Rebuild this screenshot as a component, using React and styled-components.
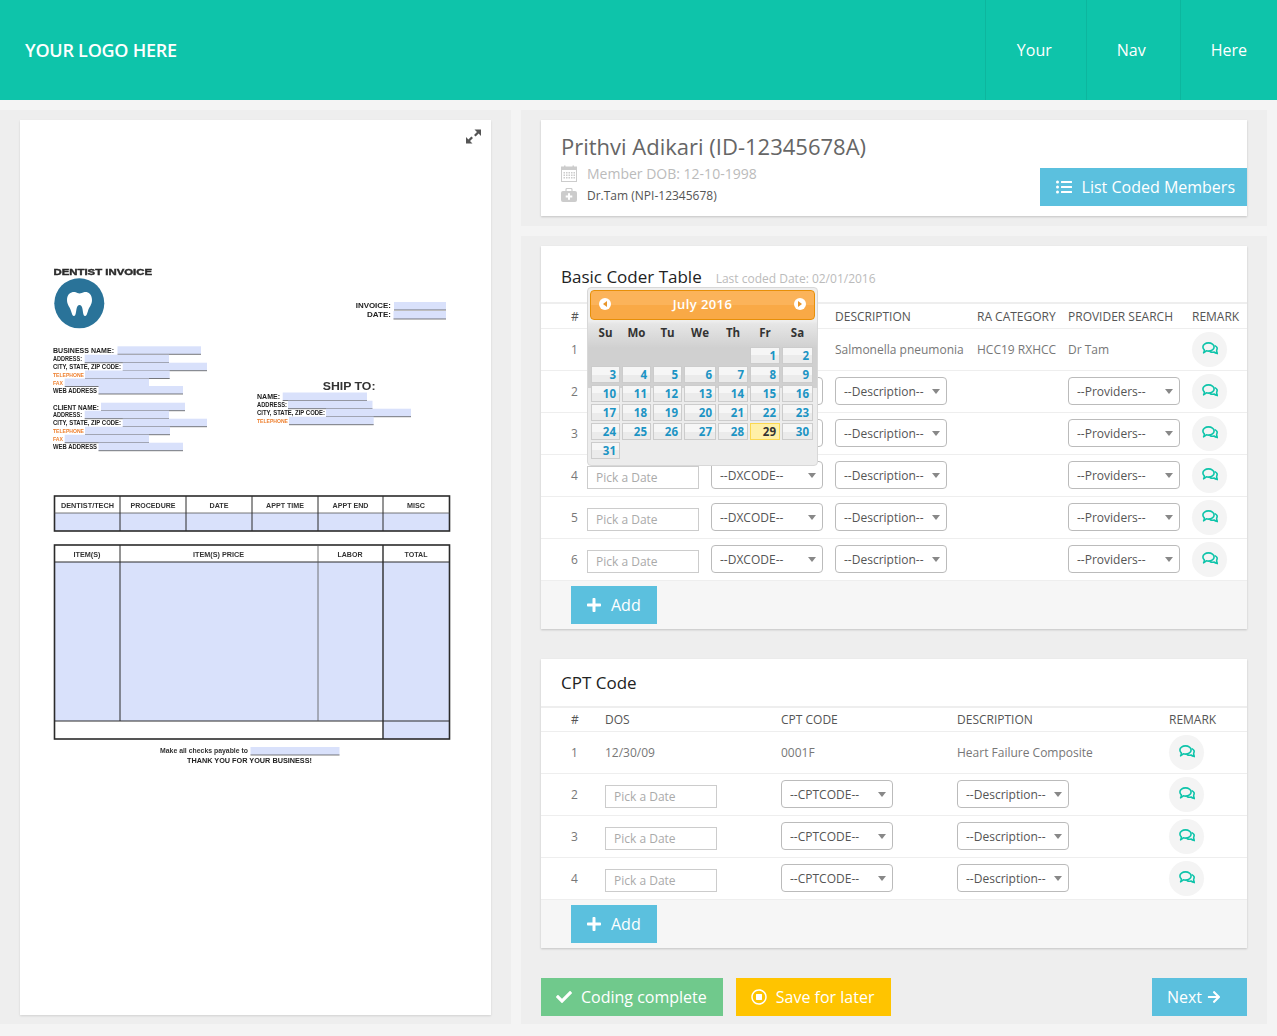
import React from 'react';
import styled, { createGlobalStyle } from 'styled-components';
import { FaListUl, FaCheck, FaPlus, FaRegStopCircle, FaArrowRight } from 'react-icons/fa';

const Global = createGlobalStyle`
  html, body { margin: 0; padding: 0; background: #f4f4f4; }
  body { font-family: "Open Sans", "Liberation Sans", sans-serif; color: #666; font-size: 12px; }
  * { box-sizing: border-box; }
`;

const Page = styled.div`
  width: 1277px;
  height: 1036px;
  overflow: hidden;
`;
const Header = styled.header`
  height: 100px;
  background: #0ec4aa;
  display: flex;
  align-items: stretch;
  justify-content: space-between;
  color: #fff;
`;
const Logo = styled.div`
  align-self: center;
  margin-left: 25px;
  font-size: 18px;
  font-weight: 600;
  letter-spacing: -0.25px;
`;
const Nav = styled.nav`
  display: flex;
`;
const NavItem = styled.a`
  display: flex;
  align-items: center;
  padding: 0 34px 0 30px;
  font-size: 16px;
  font-weight: 400;
  border-left: 1px solid rgba(0, 0, 0, 0.07);
  &:first-child {
    padding-left: 31px;
  }
  &:last-child {
    padding-right: 30px;
  }
`;
const Main = styled.main`
  display: flex;
  gap: 10px;
  padding-top: 10px;
`;
const LeftColumn = styled.section`
  width: 511px;
  height: 914px;
  background: #eeeeee;
  padding: 10px 20px;
`;
const DocCard = styled.div`
  position: relative;
  width: 471px;
  height: 895px;
  background: #fff;
  box-shadow: 0 1px 2px rgba(0, 0, 0, 0.12);
`;
const ExpandButton = styled.span`
  position: absolute;
  top: 9px;
  right: 10px;
  line-height: 0;
`;
const DocSvg = styled.svg`
  display: block;
  filter: blur(0.3px);
  font-family: "Liberation Sans", Arial, sans-serif;
`;
const RightColumn = styled.section`
  width: 746px;
  display: flex;
  flex-direction: column;
  gap: 10px;
`;
const Band = styled.div`
  background: #eeeeee;
  padding: 10px 20px;
  display: flex;
  flex-direction: column;
  gap: 30px;
`;
const Card = styled.div`
  position: relative;
  background: #fff;
  box-shadow: 0 1px 2px rgba(0, 0, 0, 0.18);
`;
const MemberCard = styled(Card)`
  height: 96px;
  padding: 11px 20px 0;
  display: flex;
  justify-content: space-between;
`;
const MemberName = styled.h1`
  margin: 0 0 1px;
  font-size: 22px;
  line-height: 30px;
  font-weight: 400;
  color: #666;
`;
const MemberLine = styled.div`
  display: flex;
  align-items: center;
  gap: 10px;
  height: 22px;
  font-size: ${p => (p.$strong ? '12px' : '14px')};
  color: ${p => (p.$strong ? '#555' : '#bbb')};
`;
const MemberIcon = styled.span`
  display: inline-flex;
  width: 16px;
  justify-content: center;
`;
const ActionButton = styled.button`
  display: inline-flex;
  align-items: center;
  gap: ${p => p.$gap || 9}px;
  height: 38px;
  border: 0;
  padding: 0 ${p => p.$pad || 16}px 0 15px;
  background: ${p => p.$bg || '#5bc0de'};
  color: #fff;
  font-family: inherit;
  font-size: 16px;
  font-weight: 400;
  white-space: nowrap;
  & > svg {
    font-size: ${p => p.$icon || 16}px;
    flex: none;
  }
`;
const ListButton = styled(ActionButton)`
  align-self: flex-end;
  margin: 0 -20px 10px 0;
  padding: 0 12px 0 16px;
  gap: 10px;
`;
const CardHead = styled.div`
  display: flex;
  align-items: center;
  gap: 14px;
  height: ${p => (p.$tall ? 58 : 49)}px;
  padding: ${p => (p.$tall ? '5px' : '0')} 20px 0;
  border-bottom: 2px solid #eee;
`;
const CardTitle = styled.h2`
  margin: 0;
  font-size: 17px;
  font-weight: 400;
  color: #222;
`;
const CardNote = styled.span`
  font-size: 12px;
  color: #bbb;
  padding-top: 3px;
`;
const Row = styled.div`
  display: grid;
  grid-template-columns: ${p => p.$cols};
  align-items: center;
  height: ${p => p.$h || 42}px;
  padding-left: 30px;
  border-bottom: 1px solid #eee;
  font-size: 12px;
  color: ${p => (p.$head ? '#555' : '#777')};
  white-space: nowrap;
`;
const DateCell = styled.div`
  display: flex;
  align-items: flex-end;
  height: 28px;
  margin-bottom: 1px;
`;
const DateInput = styled.div`
  width: 112px;
  height: 23px;
  border: 1px solid #ccc;
  padding-left: 8px;
  line-height: 22px;
  font-size: 12px;
  color: #aaa;
`;
const Select = styled.div`
  position: relative;
  width: 112px;
  height: 28px;
  margin-bottom: 1px;
  border: 1px solid #bbb;
  border-radius: 4px;
  padding-left: 8px;
  line-height: 28px;
  font-size: 12px;
  color: #555;
  &::after {
    content: '';
    position: absolute;
    right: 6px;
    top: 11px;
    border: 4px solid transparent;
    border-top: 5px solid #888;
    border-bottom: 0;
  }
`;
const RemarkButton = styled.span`
  display: flex;
  align-items: center;
  justify-content: center;
  width: 35px;
  height: 35px;
  padding-bottom: 3px;
  border-radius: 50%;
  background: #f4f4f4;
`;
const CardFooter = styled.div`
  height: 48px;
  padding: 5px 30px 0;
  background: #f6f6f6;
`;
const ButtonBar = styled.div`
  display: flex;
  justify-content: space-between;
  margin-bottom: -2px;
`;
const ButtonGroup = styled.div`
  display: flex;
  gap: 13px;
`;
const Calendar = styled.div`
  position: absolute;
  left: 46px;
  top: 41px;
  width: 231px;
  height: 179px;
  padding: 2px;
  border: 1px solid #d8d8d8;
  border-radius: 4px;
  background: linear-gradient(#eeeeee 0, #eeeeee 33px, #e6e6e6 36px, #d0d0d0 60px, #d0d0d0 100px, #ececec 100px);
`;
const CalHeader = styled.div`
  display: flex;
  align-items: center;
  justify-content: space-between;
  height: 30px;
  padding: 0 8px 2px;
  border: 1px solid #e78f08;
  border-radius: 4px;
  background: linear-gradient(#fbb35a 0, #fbb35a 50%, #f9a946 50%, #f9a946 100%);
  color: #fff;
  font-size: 13px;
  font-weight: 600;
  letter-spacing: 0.4px;
`;
const CalArrow = styled.span`
  display: flex;
  align-items: center;
  justify-content: center;
  width: 12px;
  height: 12px;
  border-radius: 50%;
  background: #fff;
  &::before {
    content: '';
    border-style: solid;
    border-color: transparent;
    border-width: 3.5px 0;
    ${p => (p.$dir === 'left' ? 'border-right: 4px solid #e8962a;' : 'border-left: 4px solid #e8962a;')}
  }
`;
const CalGrid = styled.div`
  display: grid;
  grid-template-columns: 29px 29px 29px 32px 30px 30px 31px;
  grid-template-rows: 22px repeat(6, 17px);
  column-gap: 2px;
  row-gap: 2px;
  margin-top: 3px;
  padding-left: 1px;
`;
const WeekDay = styled.div`
  text-align: center;
  line-height: 20px;
  font-size: 11.5px;
  font-weight: 700;
  color: #333;
`;
const DayCell = styled.div`
  grid-column: ${p => p.$col || 'auto'};
  border: 1px solid ${p => (p.$today ? '#fbd850' : '#cccccc')};
  background: ${p => (p.$today ? '#fff0a8' : 'linear-gradient(#f6f6f6 50%, #ebebeb 50%)')};
  color: ${p => (p.$today ? '#333' : '#1c94c4')};
  text-align: right;
  padding-right: 3px;
  line-height: 15px;
  font-size: 11.5px;
  font-weight: 700;
`;

const basicCols = '16px 124px 124px 142px 91px 124px 55px';
const cptCols = '34px 176px 176px 212px 78px';
const week = ['Su', 'Mo', 'Tu', 'We', 'Th', 'Fr', 'Sa'];
const days = Array.from({ length: 31 }, (_, i) => i + 1);

const CommentsIcon = () => (
  <svg width="16" height="13" viewBox="0 0 16 13" fill="none" stroke="#0ec4aa" strokeWidth="1.6" strokeLinejoin="round" strokeLinecap="round">
    <path d="M6.5 0.9C9.6 0.9 12.1 2.8 12.1 5C12.1 7.2 9.6 9.1 6.5 9.1C5.7 9.1 5 9 4.3 8.8C3.6 9.6 2.6 10.4 1.6 10.8C2.2 9.8 2.4 8.8 2.3 7.8C1.4 7 0.9 6 0.9 5C0.9 2.8 3.4 0.9 6.5 0.9Z" />
    <path d="M13.2 3.9C15 4.8 15.6 6.4 14.8 7.8C14.4 8.5 14.8 10 15.4 11.6C14 11.2 12.8 10.6 12 10C10.5 10.4 9 10.2 8 9.5" />
  </svg>
);

const Remark = () => (
  <RemarkButton><CommentsIcon /></RemarkButton>
);

const CalendarIcon = () => (
  <svg width="16" height="17" viewBox="0 0 16 17">
    <rect x="0.5" y="2" width="15" height="14.5" fill="#fff" stroke="#ccc" />
    <rect x="0.5" y="2" width="15" height="3" fill="#ccc" />
    <rect x="3" y="0.5" width="1.5" height="3" fill="#ccc" />
    <rect x="11.5" y="0.5" width="1.5" height="3" fill="#ccc" />
    {[7, 9.5, 12].map(y => [2.5, 5, 7.5, 10, 12.5].map(x => (
      <rect key={`${x}-${y}`} x={x} y={y} width="1.5" height="1.5" fill="#ccc" />
    )))}
  </svg>
);

const MedkitIcon = () => (
  <svg width="16" height="14" viewBox="0 0 16 14">
    <path d="M5 3V1.6C5 0.9 5.6 0.5 6.2 0.5H9.8C10.4 0.5 11 0.9 11 1.6V3" fill="none" stroke="#ccc" strokeWidth="1.2" />
    <rect x="0" y="3" width="16" height="11" rx="2" fill="#ccc" />
    <rect x="7" y="5.2" width="2" height="6.6" fill="#fff" />
    <rect x="4.7" y="7.5" width="6.6" height="2" fill="#fff" />
  </svg>
);

const ExpandIcon = () => (
  <svg width="15" height="15" viewBox="0 0 15 15" fill="#555">
    <path d="M8.5 0.5H15V7L12.6 4.6L9.6 7.5L8 5.9L11 3Z" />
    <path d="M6.5 14.5H0V8L2.4 10.4L5.4 7.5L7 9.1L4 12Z" />
  </svg>
);

const fields = [
  ['BUSINESS NAME:', 53, 114, 352.7, 117.5, 201, 346.3, '#222', 7],
  ['ADDRESS:', 53, 82, 361, 84.7, 169, 354.7, '#222', 6.6],
  ['CITY, STATE, ZIP CODE:', 53, 121, 369, 122.7, 207, 362.7, '#222', 6.6],
  ['TELEPHONE', 53, 84, 377, 85, 169.7, 370.5, '#ee7f2d', 6],
  ['FAX', 53, 63, 385, 64.7, 149, 378.5, '#ee7f2d', 6],
  ['WEB ADDRESS', 53, 97, 392.5, 98.5, 183, 386, '#222', 6.4],
  ['CLIENT NAME:', 53, 99, 409.5, 101, 185, 402.7, '#222', 7],
  ['ADDRESS:', 53, 82, 417, 84.7, 169, 410.7, '#222', 6.6],
  ['CITY, STATE, ZIP CODE:', 53, 121, 425, 122.7, 207, 418.7, '#222', 6.6],
  ['TELEPHONE', 53, 84, 433, 85, 170, 426.7, '#ee7f2d', 6],
  ['FAX', 53, 63, 441, 64.7, 149, 434.7, '#ee7f2d', 6],
  ['WEB ADDRESS', 53, 97, 449, 98.5, 183, 442.7, '#222', 6.4],
  ['INVOICE:', 355.7, 391, 308, 394, 446, 302, '#222', 8],
  ['DATE:', 367, 391, 317, 393.5, 446, 311, '#222', 8],
  ['NAME:', 257, 280, 399, 282.7, 367, 392.5, '#222', 7],
  ['ADDRESS:', 257, 287, 407, 288, 372.5, 400.7, '#222', 6.6],
  ['CITY, STATE, ZIP CODE:', 257, 325, 415, 326, 411, 408.7, '#222', 6.6],
  ['TELEPHONE', 257, 288, 423, 289, 373.7, 416.7, '#ee7f2d', 6],
];
const table1Labels = [['DENTIST/TECH', 87.5, 53], ['PROCEDURE', 153, 45], ['DATE', 219, 19], ['APPT TIME', 285, 38], ['APPT END', 350.5, 36], ['MISC', 416, 18]];
const table2Labels = [['ITEM(S)', 87, 27], ['ITEM(S) PRICE', 218.5, 51], ['LABOR', 350, 25], ['TOTAL', 416, 23]];
const blue = '#d9e1fb';
const ink = '#2b2b2b';

const Label = ({ x, y, w, size = 5.8, fill = '#222', heavy = 0, children }) => (
  <text x={x} y={y} fontSize={size} fontWeight="700" fill={fill} stroke={heavy ? fill : 'none'} strokeWidth={heavy} textLength={w} lengthAdjust="spacingAndGlyphs">{children}</text>
);

const InvoiceDrawing = () => (
  <DocSvg width="471" height="895" viewBox="20 120 471 895">
    <Label x={53.5} y={275} w={98.5} size={9.6} fill="#2b2b2b" heavy={0.45}>DENTIST INVOICE</Label>
    <circle cx="79.3" cy="303.3" r="25" fill="#2a7399" />
    <path d="M67 300C67 293 72 291.5 75 292C77 292.5 78 293.5 79.5 293.5C81 293.5 82.5 292.5 84.5 292C88 291.5 92 294 92 300C92 305 89 307 88 311C87 314 86.5 316 85 316C83 316 83 311 82.5 309C82 306.5 81 305 79.5 305C78 305 77 306.5 76.5 309C76 311 76 316 74 316C72.5 316 72 314 71 311C70 307 67 305 67 300Z" fill="#fff" />
    {fields.map(([t, x1, x2, base, fx1, fx2, fy, fill, size], i) => (
      <g key={i}>
        <Label x={x1} y={base} w={x2 - x1} size={size} fill={fill}>{t}</Label>
        <rect x={fx1} y={fy} width={fx2 - fx1} height="8" fill={blue} />
        <line x1={fx1} x2={fx2} y1={fy + 8} y2={fy + 8} stroke="#444" strokeWidth="0.7" />
      </g>
    ))}
    <Label x={322.7} y={390} w={52.8} size={11.5} fill="#333">SHIP TO:</Label>

    <rect x="54.5" y="513" width="395" height="18" fill={blue} />
    <rect x="54.5" y="496" width="395" height="35" fill="none" stroke={ink} strokeWidth="1.6" />
    <line x1="54.5" x2="449.5" y1="513" y2="513" stroke="#555" strokeWidth="0.8" />
    {[120, 186, 252, 318, 383].map(x => (
      <line key={x} x1={x} x2={x} y1="496" y2="531" stroke={ink} strokeWidth="1" />
    ))}
    {table1Labels.map(([t, cx, w]) => (
      <Label key={t} x={cx - w / 2} y={507.8} w={w} size={6.8} fill="#333">{t}</Label>
    ))}

    <rect x="54.5" y="562" width="395" height="159" fill={blue} />
    <rect x="383" y="721" width="66.5" height="18" fill={blue} />
    <rect x="54.5" y="545" width="395" height="194" fill="none" stroke={ink} strokeWidth="1.6" />
    <line x1="54.5" x2="449.5" y1="562" y2="562" stroke={ink} strokeWidth="1" />
    <line x1="54.5" x2="449.5" y1="721" y2="721" stroke={ink} strokeWidth="1" />
    <line x1="120" x2="120" y1="545" y2="721" stroke={ink} strokeWidth="1" />
    <line x1="318" x2="318" y1="545" y2="721" stroke="#555" strokeWidth="0.8" />
    <line x1="383" x2="383" y1="545" y2="739" stroke={ink} strokeWidth="1.4" />
    {table2Labels.map(([t, cx, w]) => (
      <Label key={t} x={cx - w / 2} y={556.5} w={w} size={6.8} fill="#333">{t}</Label>
    ))}

    <Label x={160} y={753} w={88} size={8} fill="#333">Make all checks payable to</Label>
    <rect x="250.5" y="747" width="89" height="8" fill={blue} />
    <line x1="250.5" x2="339.5" y1="755" y2="755" stroke="#444" strokeWidth="0.7" />
    <Label x={187} y={763} w={125} size={8} fill="#222">THANK YOU FOR YOUR BUSINESS!</Label>
  </DocSvg>
);

const DatePicker = () => (
  <Calendar>
    <CalHeader>
      <CalArrow $dir="left" />
      <span>July 2016</span>
      <CalArrow $dir="right" />
    </CalHeader>
    <CalGrid>
      {week.map(d => <WeekDay key={d}>{d}</WeekDay>)}
      {days.map(d => (
        <DayCell key={d} $col={d === 1 ? 6 : undefined} $today={d === 29}>{d}</DayCell>
      ))}
    </CalGrid>
  </Calendar>
);

const BasicRow = ({ n }) => (
  <Row $cols={basicCols}>
    <span>{n}</span>
    <DateCell><DateInput>Pick a Date</DateInput></DateCell>
    <Select>--DXCODE--</Select>
    <Select>--Description--</Select>
    <span />
    <Select>--Providers--</Select>
    <Remark />
  </Row>
);

const CptRow = ({ n }) => (
  <Row $cols={cptCols}>
    <span>{n}</span>
    <DateCell><DateInput>Pick a Date</DateInput></DateCell>
    <Select>--CPTCODE--</Select>
    <Select>--Description--</Select>
    <Remark />
  </Row>
);

export default function App() {
  return (
    <Page>
      <Global />
      <Header>
        <Logo>YOUR LOGO HERE</Logo>
        <Nav>
          <NavItem>Your</NavItem>
          <NavItem>Nav</NavItem>
          <NavItem>Here</NavItem>
        </Nav>
      </Header>
      <Main>
        <LeftColumn>
          <DocCard>
            <InvoiceDrawing />
            <ExpandButton><ExpandIcon /></ExpandButton>
          </DocCard>
        </LeftColumn>
        <RightColumn>
          <Band>
            <MemberCard>
              <div>
                <MemberName>Prithvi Adikari (ID-12345678A)</MemberName>
                <MemberLine><MemberIcon><CalendarIcon /></MemberIcon>Member DOB: 12-10-1998</MemberLine>
                <MemberLine $strong><MemberIcon><MedkitIcon /></MemberIcon>Dr.Tam (NPI-12345678)</MemberLine>
              </div>
              <ListButton><FaListUl />List Coded Members</ListButton>
            </MemberCard>
          </Band>
          <Band>
            <Card>
              <CardHead $tall>
                <CardTitle>Basic Coder Table</CardTitle>
                <CardNote>Last coded Date: 02/01/2016</CardNote>
              </CardHead>
              <Row $cols={basicCols} $h={25} $head>
                <span>#</span><span /><span /><span>DESCRIPTION</span><span>RA CATEGORY</span><span>PROVIDER SEARCH</span><span>REMARK</span>
              </Row>
              <Row $cols={basicCols}>
                <span>1</span><span /><span />
                <span>Salmonella pneumonia</span>
                <span>HCC19 RXHCC</span>
                <span>Dr Tam</span>
                <Remark />
              </Row>
              {[2, 3, 4, 5, 6].map(n => <BasicRow key={n} n={n} />)}
              <CardFooter>
                <ActionButton><FaPlus />Add</ActionButton>
              </CardFooter>
              <DatePicker />
            </Card>
            <Card>
              <CardHead>
                <CardTitle>CPT Code</CardTitle>
              </CardHead>
              <Row $cols={cptCols} $h={24} $head>
                <span>#</span><span>DOS</span><span>CPT CODE</span><span>DESCRIPTION</span><span>REMARK</span>
              </Row>
              <Row $cols={cptCols}>
                <span>1</span><span>12/30/09</span><span>0001F</span><span>Heart Failure Composite</span>
                <Remark />
              </Row>
              {[2, 3, 4].map(n => <CptRow key={n} n={n} />)}
              <CardFooter>
                <ActionButton><FaPlus />Add</ActionButton>
              </CardFooter>
            </Card>
            <ButtonBar>
              <ButtonGroup>
                <ActionButton $bg="#70c98c"><FaCheck />Coding complete</ActionButton>
                <ActionButton $bg="#ffc400" $pad={17}><FaRegStopCircle />Save for later</ActionButton>
              </ButtonGroup>
              <ActionButton $gap={5} $pad={26} $icon={14}>Next<FaArrowRight /></ActionButton>
            </ButtonBar>
          </Band>
        </RightColumn>
      </Main>
    </Page>
  );
}
